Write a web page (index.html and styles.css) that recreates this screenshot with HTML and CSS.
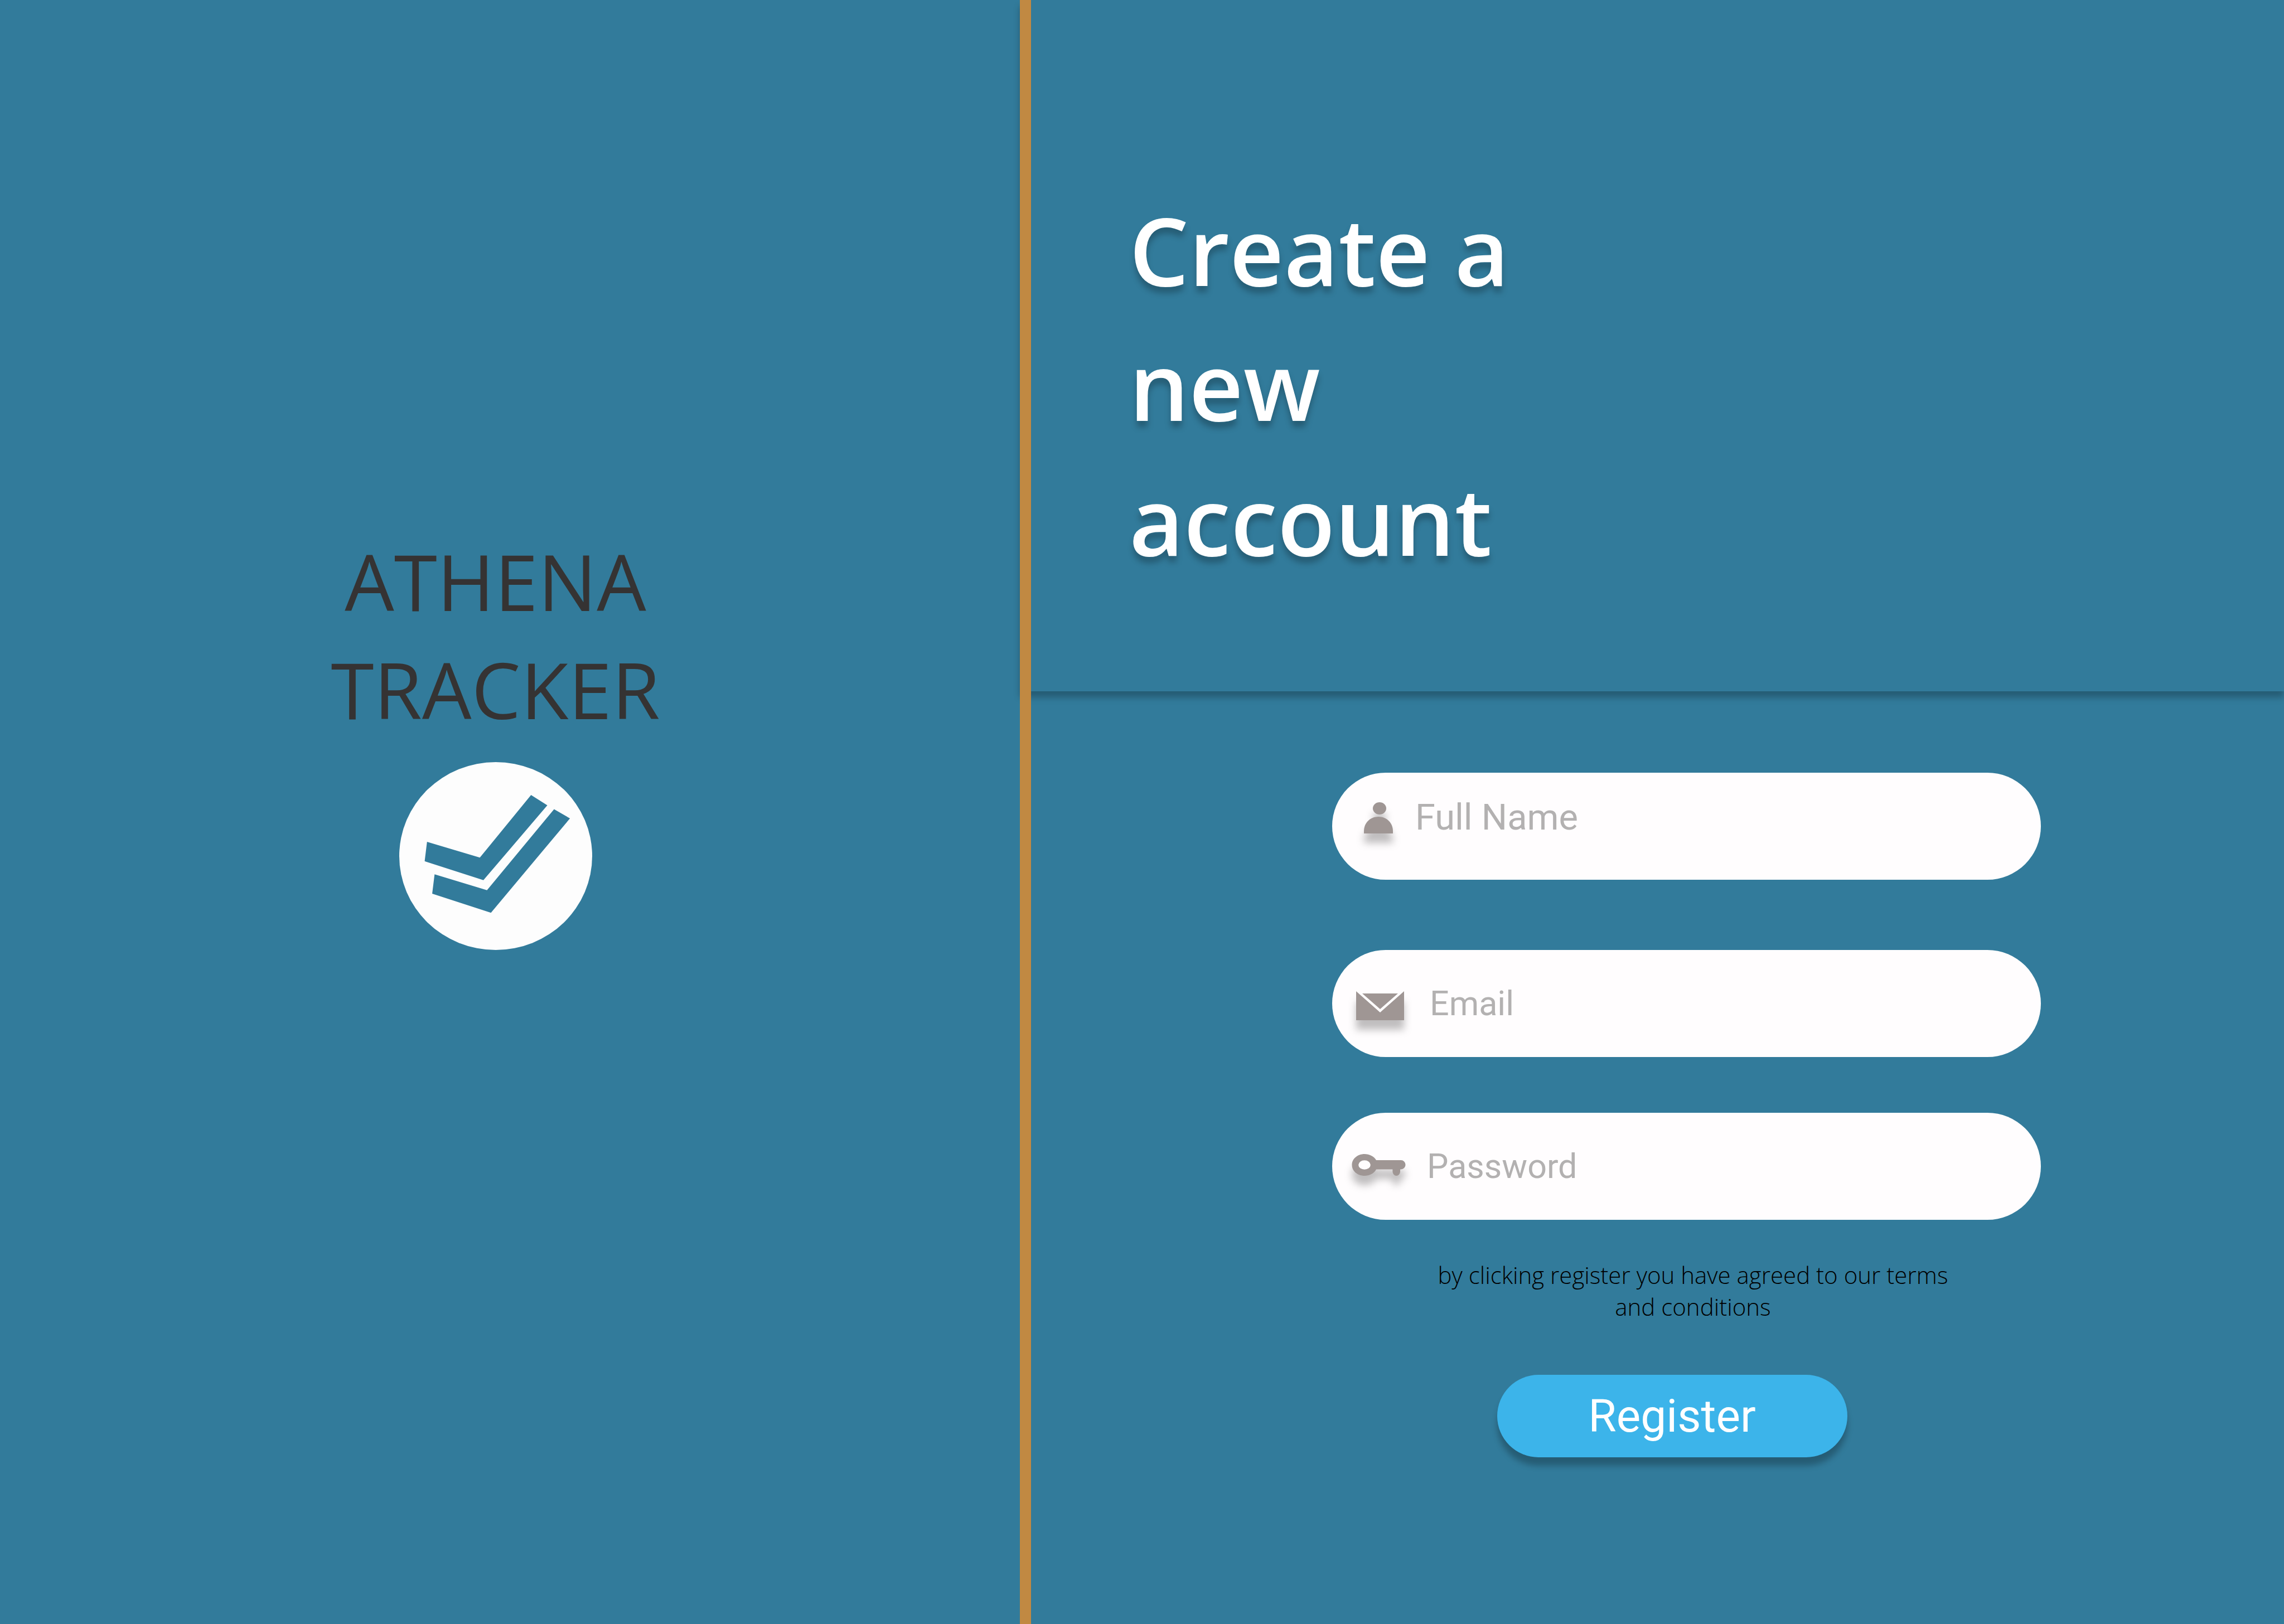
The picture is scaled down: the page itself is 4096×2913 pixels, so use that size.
FILE: index.html
```html
<!DOCTYPE html>
<html lang="en">
<head>
  <meta charset="utf-8">
  <meta name="viewport" content="width=device-width, initial-scale=1">
  <title>Athena Tracker</title>
  <link rel="stylesheet" href="styles.css">
</head>
<body>
  <main class="page">
    <section class="brand">
      <p class="brand-name">ATHENA<br>TRACKER</p>
      <svg class="brand-mark" viewBox="0 0 486 474" preserveAspectRatio="none" aria-hidden="true">
        <ellipse class="mark-disc" cx="243" cy="237" rx="243" ry="237"/>
        <path class="mark-check" d="M70 201L203 241L332 83L373 109L212 298L64 250Z"/>
        <path class="mark-check" d="M89 283L221 323L390 119L430 142L231 380L83 332Z"/>
      </svg>
    </section>

    <section class="signup">
      <header class="signup-header">
        <h1 class="title">Create a<br>new<br>account</h1>
      </header>

      <div class="signup-body">
        <form class="form">
          <label class="field field-name">
            <svg class="icon" viewBox="0 0 96 72" aria-hidden="true">
              <ellipse cx="49" cy="20" rx="12" ry="11"/>
              <path d="M21 65V61C21 46 32 35 47 35S73 46 73 61V65Z"/>
            </svg>
            <input class="input" type="text" placeholder="Full Name" aria-label="Full Name">
          </label>
          <label class="field field-email">
            <svg class="icon" viewBox="0 0 96 72" aria-hidden="true">
              <path class="icon-gap" d="M7 14L18 18H82L93 14L50 53Z"/>
              <path d="M18 18H82L50 46Z"/>
              <path d="M7 14L50 52L93 14V66H7Z"/>
            </svg>
            <input class="input" type="email" placeholder="Email" aria-label="Email">
          </label>
          <label class="field">
            <svg class="icon" viewBox="0 0 96 72" aria-hidden="true">
              <path d="M22 14C31 14 39 18 43 25H87.500A8 8.200 0 0 1 87.500 41.500H86V45.500A6.800 7.400 0 0 1 72.400 45.500V41.500H43C39 49 31 53 22 53C9.500 53-.500 44.500-.500 33.500S9.500 14 22 14Z"/>
              <ellipse class="icon-gap" cx="22" cy="33.500" rx="10.800" ry="8.300"/>
            </svg>
            <input class="input" type="password" placeholder="Password" aria-label="Password">
          </label>
          <p class="terms">by clicking register you have agreed to our terms and conditions</p>
          <button class="register" type="submit">Register</button>
        </form>
      </div>
    </section>
  </main>
</body>
</html>
```

FILE: styles.css
```css
* {
  box-sizing: border-box;
}

body {
  margin: 0;
  background: #327b9b;
  font-family: "Open Sans", "Noto Sans", sans-serif;
}

.page {
  display: grid;
  grid-template-columns: 1829fr 2267fr;
  min-height: 100vh;
}

/* Brand panel */
.brand {
  display: flex;
  flex-direction: column;
  align-items: center;
  justify-content: center;
  gap: 34px;
  padding: 0 52px 265px 0;
}

.brand-name {
  margin: 0;
  color: #353333;
  font-size: 140px;
  line-height: 194px;
  text-align: center;
}

.brand-mark {
  width: 346px;
  height: 337px;
}

.mark-disc {
  fill: #fdfdfd;
}

.mark-check {
  fill: #327b9b;
}

/* Sign-up panel */
.signup {
  display: flex;
  flex-direction: column;
}

.signup-header {
  padding: 327px 176px 187px;
  border-left: 20px solid #c18942;
  box-shadow: 0 11px 11px rgba(0, 0, 0, 0.25);
}

.title {
  margin: 0;
  color: #fff;
  font-size: 169px;
  font-weight: 600;
  line-height: 242px;
  text-shadow: 0 11px 11px rgba(0, 0, 0, 0.25);
}

.signup-body {
  flex: 1;
  padding: 146px 436px 0 540px;
  border-left: 20px solid #c18942;
}

.form {
  display: flex;
  flex-direction: column;
  align-items: center;
}

.field {
  display: flex;
  align-items: center;
  gap: 38px;
  width: 100%;
  height: 192px;
  margin-bottom: 100px;
  padding: 0 96px 0 36px;
  border-radius: 96px;
  background: #fffdfe;
  font-size: 61px;
}

.field-name {
  gap: 17px;
  margin-bottom: 126px;
  padding-bottom: 32px;
  font-size: 65px;
}

.field-email {
  gap: 43px;
}

.icon {
  flex: none;
  width: 96px;
  height: 72px;
  overflow: visible;
  fill: #9f9694;
  filter: drop-shadow(0 17px 7px rgba(0, 0, 0, 0.25));
}

.icon-gap {
  fill: #fffdfe;
}

.input {
  flex: 1;
  min-width: 0;
  padding: 0;
  border: 0;
  outline: 0;
  background: transparent;
  color: #353333;
  font-family: Roboto, sans-serif;
  font-size: inherit;
  line-height: 76px;
}

.input::placeholder {
  color: #b3b1b1;
  opacity: 1;
}

.terms {
  width: 960px;
  margin: -30px 0 94px 23px;
  color: #000;
  font-size: 42px;
  font-weight: 300;
  line-height: 57px;
  text-align: center;
}

.register {
  width: 628px;
  height: 148px;
  margin-right: 52px;
  padding: 0;
  border: 0;
  border-radius: 74px;
  background: #3cb4ea;
  box-shadow: 0 15px 11px rgba(0, 0, 0, 0.25);
  color: #fff;
  font-family: Roboto, sans-serif;
  font-size: 82px;
  line-height: 98px;
}
```
